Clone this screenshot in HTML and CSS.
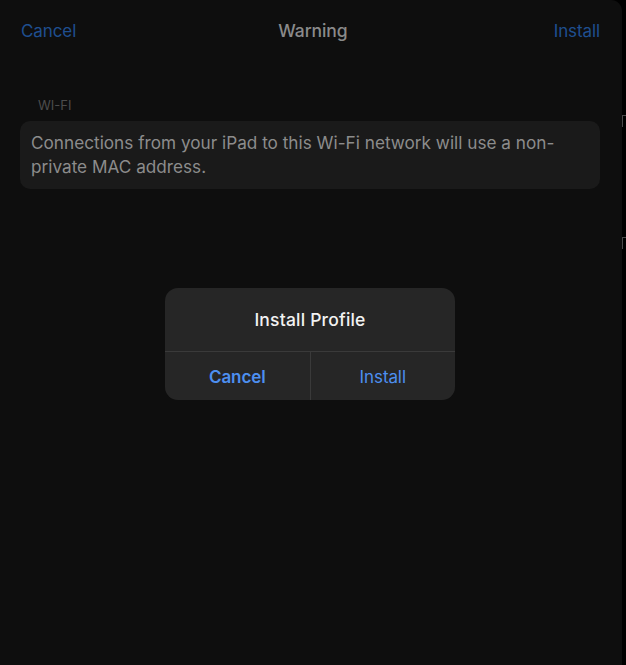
FILE: index.html
```html
<!DOCTYPE html>
<html>
<head>
<meta charset="utf-8">
<link rel="stylesheet" href="styles.css">
</head>
<body>
<div class="screen">
  <div class="sheet">
    <div class="nav">
      <span class="nav-btn">Cancel</span>
      <span class="nav-title">Warning</span>
      <span class="nav-btn">Install</span>
    </div>
    <div class="section">
      <div class="section-label">WI-FI</div>
      <div class="card">Connections from your iPad to this Wi-Fi network will use a non-private MAC address.</div>
    </div>
  </div>
  <div class="edge-mark edge-mark-1"></div>
  <div class="edge-mark edge-mark-2"></div>
  <div class="alert">
    <div class="alert-title">Install Profile</div>
    <div class="alert-actions">
      <span class="alert-btn alert-btn-bold">Cancel</span>
      <span class="alert-btn">Install</span>
    </div>
  </div>
</div>
</body>
</html>
```

FILE: styles.css
```css
html, body {
  margin: 0;
  padding: 0;
  background: #000;
}
.screen {
  position: relative;
  width: 626px;
  height: 665px;
  display: flex;
  font-family: Inter, Roboto, "Noto Sans", sans-serif;
  -webkit-font-smoothing: antialiased;
}
.sheet {
  width: 622px;
  height: 665px;
  background: #0e0e0e;
  border-top-right-radius: 11px;
  display: flex;
  flex-direction: column;
}
.nav {
  height: 61px;
  display: flex;
  align-items: center;
  justify-content: space-between;
  padding: 0 22px 0 21px;
  font-size: 17px;
  letter-spacing: -0.1px;
}
.nav-btn {
  color: #1f4f90;
}
.nav-title {
  color: #8a8a8a;
  font-weight: 500;
  font-size: 17.5px;
  margin-right: 4px;
}
.section {
  padding: 36px 22px 0 20px;
}
.section-label {
  color: #4c4c4c;
  font-size: 13px;
  padding-left: 18px;
  height: 24px;
}
.card {
  background: #1a1a1a;
  border-radius: 10px;
  color: #8c8c8c;
  font-size: 17.2px;
  line-height: 24px;
  padding: 10px 30px 10px 11px;
}
.edge-mark {
  position: absolute;
  left: 622px;
  width: 3px;
  height: 11px;
  border-left: 1px solid #4a4a4a;
  border-top: 1px solid #4a4a4a;
}
.edge-mark-1 { top: 115px; }
.edge-mark-2 { top: 237px; }
.alert {
  position: absolute;
  left: 165px;
  top: 288px;
  width: 290px;
  height: 112px;
  background: #262626;
  border-radius: 13px;
  display: flex;
  flex-direction: column;
  overflow: hidden;
}
.alert-title {
  height: 64px;
  display: flex;
  align-items: center;
  justify-content: center;
  color: #f2f2f2;
  font-size: 17.5px;
  font-weight: 500;
  letter-spacing: 0.2px;
  border-bottom: 1px solid #3a3a3a;
  box-sizing: border-box;
}
.alert-actions {
  flex: 1;
  display: flex;
}
.alert-btn {
  flex: 1;
  display: flex;
  align-items: center;
  justify-content: center;
  padding-top: 2px;
  color: #4d8ff0;
  font-size: 17px;
  letter-spacing: -0.1px;
}
.alert-btn + .alert-btn {
  border-left: 1px solid #3a3a3a;
}
.alert-btn-bold {
  font-weight: 600;
}
```
